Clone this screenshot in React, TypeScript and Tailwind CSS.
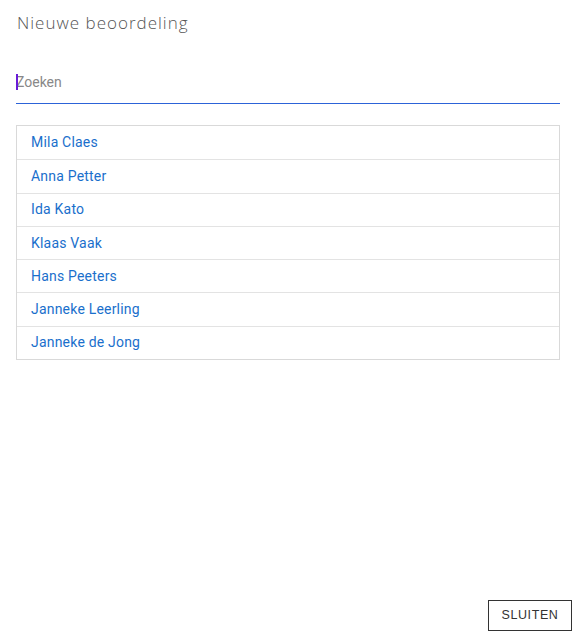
const names = [
  'Mila Claes',
  'Anna Petter',
  'Ida Kato',
  'Klaas Vaak',
  'Hans Peeters',
  'Janneke Leerling',
  'Janneke de Jong',
];

export default function App() {
  return (
    <div className="w-[578px] h-[636px] bg-white flex flex-col font-['Roboto','Liberation_Sans',sans-serif]">
      {/* titel */}
      <h1 className="pl-[17px] pt-[11px] text-[17px] leading-[24px] text-[#555] tracking-[1px] font-light font-['Open_Sans','Noto_Sans',sans-serif]">
        Nieuwe beoordeling
      </h1>

      {/* zoekveld */}
      <div className="relative ml-4 mr-[18px] mt-[34px]">
        <span className="absolute left-0 top-[5px] w-[2px] h-[16px] bg-[#6a1bd8]" />
        <input
          type="text"
          placeholder="Zoeken"
          className="block w-full pt-[5px] pb-[13px] text-[14px] leading-[16px] text-[#333] placeholder:text-[#888] outline-none bg-transparent border-0"
        />
        <div className="h-px bg-[#2c63d8]" />
      </div>

      {/* lijst */}
      <ul className="ml-4 mr-[18px] mt-[21px] border border-[#d9d9d9]">
        {names.map((n, i) => (
          <li
            key={n}
            className={`h-[33.3px] flex items-center pl-[14px] text-[14px] text-[#1a6fcc] tracking-[0.2px] ${
              i > 0 ? 'border-t border-[#e3e3e3]' : ''
            }`}
          >
            {n}
          </li>
        ))}
      </ul>

      <div className="flex-1" />

      {/* knop */}
      <div className="flex justify-end pr-[6px] pb-[5px]">
        <button className="w-[84px] h-[31px] border border-[#333] text-[12.5px] tracking-[0.6px] text-[#333] font-['Liberation_Sans',sans-serif]">
          SLUITEN
        </button>
      </div>
    </div>
  );
}
